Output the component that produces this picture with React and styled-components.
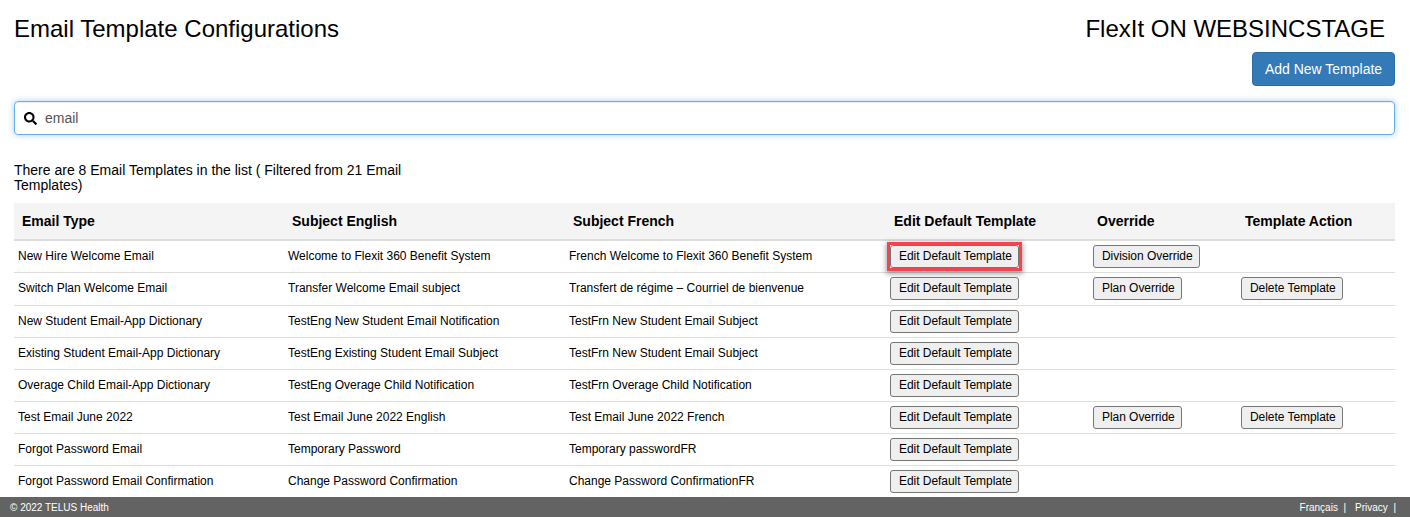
import React from "react";
import styled, { createGlobalStyle } from "styled-components";
import { FaSearch } from "react-icons/fa";

const GlobalStyle = createGlobalStyle`
  html, body {
    margin: 0;
    padding: 0;
    height: 100%;
    background: #fff;
  }
  #root {
    height: 100%;
  }
  * {
    box-sizing: border-box;
  }
`;

const Page = styled.div`
  display: flex;
  flex-direction: column;
  height: 517px;
  overflow: hidden;
  color: #000;
  font-family: "Liberation Sans", Arial, sans-serif;
`;

const Content = styled.main`
  flex: 1;
  min-height: 0;
  padding: 15px 15px 0 14px;
`;

const TitleRow = styled.div`
  display: flex;
  justify-content: space-between;
  height: 37px;
  padding-right: 10px;
`;

const Title = styled.h1`
  margin: 0;
  font-size: 24px;
  line-height: 28px;
  font-weight: 400;
`;

const ActionRow = styled.div`
  display: flex;
  justify-content: flex-end;
`;

const PrimaryButton = styled.button`
  width: 143px;
  height: 34px;
  padding: 0;
  border: 1px solid #2e6da4;
  border-radius: 4px;
  background: #337ab7;
  color: #fff;
  font-family: inherit;
  font-size: 14px;
`;

const SearchBox = styled.label`
  display: flex;
  align-items: center;
  gap: 8px;
  height: 34px;
  margin-top: 15px;
  padding: 0 9px;
  border: 1px solid #66afe9;
  border-radius: 4px;
  box-shadow: inset 0 1px 1px rgba(0, 0, 0, 0.075), 0 0 6px rgba(102, 175, 233, 0.6);
  color: #000;
  font-size: 13px;
`;

const SearchInput = styled.input`
  flex: 1;
  border: 0;
  outline: 0;
  padding: 0;
  color: #555;
  font-family: inherit;
  font-size: 14px;
`;

const Summary = styled.p`
  width: 420px;
  margin: 28px 0 0;
  font-size: 14px;
  line-height: 15px;
`;

const Table = styled.table`
  width: 1381px;
  margin-top: 10px;
  border-collapse: collapse;
  table-layout: fixed;
`;

const HeadCell = styled.th`
  width: ${(p) => p.$width}px;
  height: 37px;
  padding: 0 8px;
  background: #f4f4f4;
  border-bottom: 2px solid #ddd;
  font-size: 14px;
  font-weight: 700;
  text-align: left;
`;

const Row = styled.tr`
  height: ${(p) => (p.$tall ? 33 : 32)}px;
  border-bottom: ${(p) => (p.$last ? "0" : "1px solid #ddd")};
`;

const Cell = styled.td`
  padding: 0 4px ${(p) => (p.$tall ? 1 : 0)}px;
  font-size: 12px;
  white-space: nowrap;
`;

const RowButton = styled.button`
  height: 23px;
  padding: 0 6.6px 0 8px;
  border: 1px solid #767676;
  border-radius: 3px;
  background: #efefef;
  color: #000;
  font-family: inherit;
  font-size: 12px;
  letter-spacing: -0.05px;
  vertical-align: middle;
`;

// red annotation drawn round the first button in the screenshot
const Highlight = styled.span`
  display: inline-block;
  margin: -3px;
  border: 3px solid #f4444f;
  box-shadow: 0 2px 5px 1px rgba(0, 0, 0, 0.35);
  line-height: 0;
`;

const Footer = styled.footer`
  display: flex;
  justify-content: space-between;
  align-items: center;
  flex: none;
  height: 20px;
  padding: 0 14px 0 10px;
  background: #636363;
  color: #fff;
  font-size: 10px;
`;

const FooterLinks = styled.nav`
  display: flex;
  gap: 9px;
`;

const columns = [
  ["Email Type", 270],
  ["Subject English", 281],
  ["Subject French", 321],
  ["Edit Default Template", 203],
  ["Override", 148],
  ["Template Action", 158],
];

const rows = [
  ["New Hire Welcome Email", "Welcome to Flexit 360 Benefit System", "French Welcome to Flexit 360 Benefit System", "Division Override", null],
  ["Switch Plan Welcome Email", "Transfer Welcome Email subject", "Transfert de régime – Courriel de bienvenue", "Plan Override", "Delete Template"],
  ["New Student Email-App Dictionary", "TestEng New Student Email Notification", "TestFrn New Student Email Subject", null, null],
  ["Existing Student Email-App Dictionary", "TestEng Existing Student Email Subject", "TestFrn New Student Email Subject", null, null],
  ["Overage Child Email-App Dictionary", "TestEng Overage Child Notification", "TestFrn Overage Child Notification", null, null],
  ["Test Email June 2022", "Test Email June 2022 English", "Test Email June 2022 French", "Plan Override", "Delete Template"],
  ["Forgot Password Email", "Temporary Password", "Temporary passwordFR", null, null],
  ["Forgot Password Email Confirmation", "Change Password Confirmation", "Change Password ConfirmationFR", null, null],
];

const App = () => {
  return (
    <Page>
      <GlobalStyle />
      <Content>
        <TitleRow>
          <Title>Email Template Configurations</Title>
          <Title>FlexIt ON WEBSINCSTAGE</Title>
        </TitleRow>
        <ActionRow>
          <PrimaryButton>Add New Template</PrimaryButton>
        </ActionRow>
        <SearchBox>
          <FaSearch />
          <SearchInput defaultValue="email" />
        </SearchBox>
        <Summary>There are 8 Email Templates in the list ( Filtered from 21 Email Templates)</Summary>
        <Table>
          <thead>
            <tr>
              {columns.map(([label, width]) => (
                <HeadCell key={label} $width={width}>
                  {label}
                </HeadCell>
              ))}
            </tr>
          </thead>
          <tbody>
            {rows.map(([type, english, french, override, action], i) => {
              const tall = i === 1;
              const editButton = <RowButton>Edit Default Template</RowButton>;
              return (
                <Row key={type} $tall={tall} $last={i === rows.length - 1}>
                  <Cell $tall={tall}>{type}</Cell>
                  <Cell $tall={tall}>{english}</Cell>
                  <Cell $tall={tall}>{french}</Cell>
                  <Cell $tall={tall}>{i === 0 ? <Highlight>{editButton}</Highlight> : editButton}</Cell>
                  <Cell $tall={tall}>{override && <RowButton>{override}</RowButton>}</Cell>
                  <Cell $tall={tall}>{action && <RowButton>{action}</RowButton>}</Cell>
                </Row>
              );
            })}
          </tbody>
        </Table>
      </Content>
      <Footer>
        <span>© 2022 TELUS Health</span>
        <FooterLinks>
          <span>Français&nbsp; |</span>
          <span>Privacy&nbsp; |</span>
        </FooterLinks>
      </Footer>
    </Page>
  );
};

export default App;
